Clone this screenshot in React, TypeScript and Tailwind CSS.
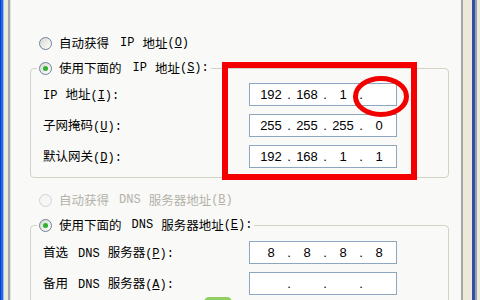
import React from 'react'

const cjk = { fontFamily: '"Noto Sans CJK SC", "Noto Sans", sans-serif' }
const mono = { fontFamily: '"Liberation Mono", monospace' }

function L({ children, ml = 'ml-[10px]', mr = 'mr-[8px]' }: { children: React.ReactNode; ml?: string; mr?: string }) {
  return (
    <span className={`${ml} ${mr} text-[12px]`} style={mono}>
      {children}
    </span>
  )
}

function Key({ k, colon }: { k: string; colon?: boolean }) {
  return (
    <span className="text-[12px]" style={mono}>
      (<u>{k}</u>){colon ? ':' : ''}
    </span>
  )
}

function Radio({ checked, disabled }: { checked?: boolean; disabled?: boolean }) {
  return (
    <span
      className={`flex h-[13px] w-[13px] items-center justify-center rounded-full border ${
        disabled ? 'border-[#cfd3d6] bg-[#f6f6f4]' : 'border-[#6f8296] bg-gradient-to-br from-[#d8d8d2] to-white'
      }`}
    >
      {checked && <span className="h-[5px] w-[5px] rounded-full bg-[#2fb02f]" />}
    </span>
  )
}

function IpBox({ parts }: { parts: string[] }) {
  return (
    <div
      className="flex h-[23px] w-[148px] items-center border border-[#8fa6c0] bg-white pl-[6px] text-[13px] text-black"
      style={{ fontFamily: '"Liberation Sans", Arial, sans-serif' }}
    >
      {parts.map((p, i) => (
        <React.Fragment key={i}>
          <span className="w-[30px] text-center">{p}</span>
          {i < 3 && <span className="w-[6px] text-center">.</span>}
        </React.Fragment>
      ))}
    </div>
  )
}

function Row({ label, parts }: { label: React.ReactNode; parts: string[] }) {
  return (
    <div className="flex h-[23px] items-center">
      <div className="w-[206px] text-[12.5px]">{label}</div>
      <IpBox parts={parts} />
    </div>
  )
}

export default function App() {
  return (
    <div className="relative flex h-[300px] w-[480px] overflow-hidden bg-[#f9f9f7] text-black" style={cjk}>
      {/* left window frame */}
      <div className="flex h-full shrink-0">
        <div className="w-[1px] bg-[#0a3cc8]" />
        <div className="w-[2px] bg-[#2468ea]" />
        <div className="w-[1px] bg-[#9ab8f0]" />
        <div className="w-[4px] bg-[#ece9d8]" />
        <div className="w-[2px] bg-[#a3a8a8]" />
        <div className="w-[1px] bg-[#e4e4de]" />
      </div>

      {/* tab page */}
      <div className="w-[450px] shrink-0 pt-[33px]">
        <div className="flex h-[20px] items-center pl-[28px] text-[12.5px]">
          <Radio />
          <span className="ml-[7px]">自动获得</span>
          <L ml="ml-[11px]">IP</L>
          <span>地址</span>
          <Key k="O" />
        </div>

        <fieldset className="ml-[19px] mt-[5px] w-[419px] rounded-[4px] border border-[#d3d2c6] pb-[9px] pl-[12px] pt-[5px]">
          <legend className="ml-[-6px] flex h-[20px] items-center px-[2px] text-[12.5px]">
            <Radio checked />
            <span className="ml-[7px]">使用下面的</span>
            <L ml="ml-[11px]">IP</L>
            <span>地址</span>
            <Key k="S" colon />
          </legend>
          <div className="flex flex-col gap-[8px]">
            <Row
              label={
                <>
                  <L ml="ml-0">IP</L>
                  <span>地址</span>
                  <Key k="I" colon />
                </>
              }
              parts={['192', '168', '1', '']}
            />
            <Row
              label={
                <>
                  <span>子网掩码</span>
                  <Key k="U" colon />
                </>
              }
              parts={['255', '255', '255', '0']}
            />
            <Row
              label={
                <>
                  <span>默认网关</span>
                  <Key k="D" colon />
                </>
              }
              parts={['192', '168', '1', '1']}
            />
          </div>
        </fieldset>

        <div className="mt-[12px] flex h-[20px] items-center pl-[28px] text-[12.5px] text-[#b4b2aa]">
          <Radio disabled />
          <span className="ml-[7px]">自动获得</span>
          <L ml="ml-[10px]">DNS</L>
          <span>服务器地址</span>
          <Key k="B" />
        </div>

        <fieldset className="ml-[19px] mt-[5px] w-[419px] rounded-[4px] border border-[#d3d2c6] pb-[9px] pl-[12px] pt-[6px]">
          <legend className="ml-[-6px] flex h-[20px] items-center px-[2px] text-[12.5px]">
            <Radio checked />
            <span className="ml-[7px]">使用下面的</span>
            <L ml="ml-[10px]">DNS</L>
            <span>服务器地址</span>
            <Key k="E" colon />
          </legend>
          <div className="flex flex-col gap-[8px]">
            <Row
              label={
                <>
                  <span>首选</span>
                  <L>DNS</L>
                  <span>服务器</span>
                  <Key k="P" colon />
                </>
              }
              parts={['8', '8', '8', '8']}
            />
            <Row
              label={
                <>
                  <span>备用</span>
                  <L>DNS</L>
                  <span>服务器</span>
                  <Key k="A" colon />
                </>
              }
              parts={['', '', '', '']}
            />
          </div>
        </fieldset>
      </div>

      {/* right window frame */}
      <div className="flex h-full shrink-0">
        <div className="w-[2px] bg-[#a3a8a8]" />
        <div className="w-[9px] bg-[#ece9d8]" />
        <div className="w-[3px] bg-[#2f4fa8]" />
        <div className="w-[2px] bg-[#9a9ea8]" />
        <div className="w-[3px] bg-[#ece9d8]" />
      </div>

      {/* red annotations */}
      <div className="absolute left-[222px] top-[62px] h-[118px] w-[195px] border-[6px] border-[#f50000]" />
      <svg className="absolute left-[350px] top-[74px]" width="62" height="46" viewBox="0 0 62 46">
        <ellipse cx="31" cy="22.5" rx="25.5" ry="18" fill="none" stroke="#f20000" strokeWidth="5" />
      </svg>

      {/* partly visible green button edge */}
      <div className="absolute left-[204px] top-[297px] h-[10px] w-[28px] rounded-full bg-[#8fd060]" />
    </div>
  )
}
